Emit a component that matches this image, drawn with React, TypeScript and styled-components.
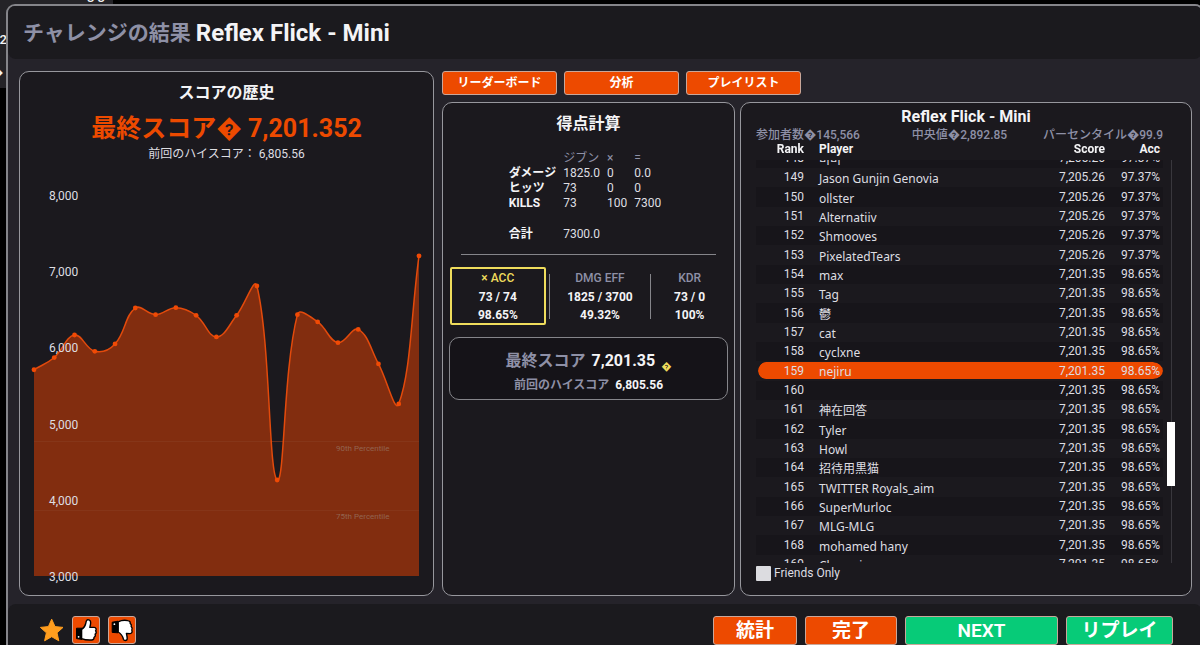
import React, { useLayoutEffect, useRef } from "react";
import styled, { createGlobalStyle, css } from "styled-components";

const color = {
  ink: "#f4f4f6",
  soft: "#dedee2",
  muted: "#8e90a6",
  orange: "#ed4a00",
  green: "#07cb78",
  yellow: "#efdc5c",
  panel: "#1b191e",
  shell: "#25232a",
  bar: "#1b1a1e",
  line: "#85858a",
};

const GlobalStyle = createGlobalStyle`
  *, *::before, *::after { box-sizing: border-box; }
  body {
    margin: 0;
    background: #000;
    color: ${color.ink};
    font: 12px/15px Roboto, "Noto Sans CJK JP", sans-serif;
  }
  h1, h2, p, dl, dd { margin: 0; }
  button { font-family: inherit; }
`;

/* ---------- shell ---------- */

const Stage = styled.div`
  position: relative;
  min-height: 100vh;
  padding: 4px 0 0 6px;
  overflow: hidden;
  display: flex;
`;

const Behind = styled.div`
  position: absolute;
  top: 0;
  left: 0;
  width: 113px;
  height: 88px;
  background: #242327;
  overflow: hidden;
  font-size: 13px;
`;

const BehindText = styled.span<{ $x: number; $y: number }>`
  position: absolute;
  left: ${(p) => p.$x}px;
  top: ${(p) => p.$y}px;
  font-weight: 500;
  white-space: pre;
`;

const Dialog = styled.main`
  position: relative;
  flex: 1;
  min-width: 0;
  margin-right: -4px;
  display: flex;
  flex-direction: column;
  border: 2px solid ${color.line};
  border-bottom: 0;
  border-radius: 9px 9px 0 0;
  background: ${color.shell};
  overflow: hidden;
`;

const Header = styled.header`
  display: flex;
  align-items: center;
  gap: 5px;
  height: 53px;
  padding: 0 15px;
  background: ${color.bar};
  border-radius: 0 0 8px 8px;
`;

const HeaderLabel = styled.span`
  font-size: 21px;
  line-height: 30px;
  font-weight: 600;
  color: ${color.muted};
`;

const Title = styled.h1`
  font-size: 24px;
  line-height: 30px;
  font-weight: 700;
`;

const Body = styled.div`
  flex: 1;
  display: grid;
  grid-template-columns: minmax(0, 415fr) minmax(0, 750fr);
  gap: 8px;
  padding: 12px 10px 8px 11px;
`;

const Panel = styled.section`
  display: flex;
  flex-direction: column;
  min-width: 0;
  border: 1px solid #97979d;
  border-radius: 10px;
  background: ${color.panel};
`;

/* ---------- score history ---------- */

const HistoryPanel = styled(Panel)`
  align-items: center;
  padding: 10px 14px 19px;
`;

const PanelTitle = styled.h2`
  font-size: 16px;
  line-height: 22px;
  font-weight: 700;
  text-align: center;
`;

const FinalScore = styled.p`
  margin-top: 8px;
  font-size: 25px;
  line-height: 34px;
  font-weight: 700;
  color: ${color.orange};
  white-space: nowrap;
`;

const PreviousBest = styled.p`
  line-height: 16px;
  color: ${color.soft};
`;

const Chart = styled.svg`
  display: block;
  width: 100%;
  margin-top: auto;
  overflow: visible;
`;

const AxisText = styled.text`
  font-size: 12px;
  fill: ${color.soft};
`;

const PercentileText = styled.text`
  font-size: 8px;
  fill: #926450;
`;

const scores = [
  5707, 5867, 6163, 5949, 6045, 6517, 6430, 6521, 6421, 6137, 6421, 6806, 4260,
  6430, 6334, 6062, 6236, 5783, 5258, 7201,
];
const percentiles = [
  { label: "90th Percentile", value: 4765 },
  { label: "75th Percentile", value: 3860 },
];

const CHART_W = 385;
const CHART_H = 389;
const yOf = (score: number) => CHART_H - ((score - 3000) / 1000) * 76.2;

type Point = { x: number; y: number };
const points: Point[] = scores.map((s, i) => ({
  x: (i * CHART_W) / (scores.length - 1),
  y: yOf(s),
}));

/* Control points lean towards the neighbours in proportion to segment length. */
function handles(prev: Point, cur: Point, next: Point, tension = 0.4) {
  const before = Math.hypot(cur.x - prev.x, cur.y - prev.y);
  const after = Math.hypot(next.x - cur.x, next.y - cur.y);
  const sum = before + after || 1;
  const fa = (tension * before) / sum;
  const fb = (tension * after) / sum;
  const dx = next.x - prev.x;
  const dy = next.y - prev.y;
  return {
    inn: { x: cur.x - fa * dx, y: cur.y - fa * dy },
    out: { x: cur.x + fb * dx, y: cur.y + fb * dy },
  };
}

function curvePath(pts: Point[]) {
  const h = pts.map((p, i) => handles(pts[i - 1] ?? p, p, pts[i + 1] ?? p));
  return pts.reduce(
    (d, p, i) =>
      i === 0
        ? `M${p.x} ${p.y}`
        : `${d} C${h[i - 1].out.x} ${h[i - 1].out.y} ${h[i].inn.x} ${h[i].inn.y} ${p.x} ${p.y}`,
    ""
  );
}

function ScoreChart() {
  const line = curvePath(points);
  return (
    <Chart viewBox={`0 0 ${CHART_W} ${CHART_H}`} role="img" aria-label="スコアの歴史">
      <path d={`${line} L${CHART_W} ${CHART_H} L0 ${CHART_H} Z`} fill="#822d0f" />
      {percentiles.map((p) => (
        <g key={p.label}>
          <path d={`M0 ${yOf(p.value)}H${CHART_W}`} stroke="#8a3c20" strokeWidth="1" opacity="0.6" />
          <PercentileText x={302} y={yOf(p.value) + 9}>{p.label}</PercentileText>
        </g>
      ))}
      <path d={line} fill="none" stroke="#e24a0c" strokeWidth="1.5" />
      {points.map((p) => (
        <circle key={p.x} cx={p.x} cy={p.y} r="2.4" fill="#f04a05" />
      ))}
      {[8000, 7000, 6000, 5000, 4000, 3000].map((v) => (
        <AxisText key={v} x={15} y={yOf(v) + 5}>{v.toLocaleString("en-US")}</AxisText>
      ))}
    </Chart>
  );
}

/* ---------- right side ---------- */

const RightSide = styled.div`
  display: flex;
  flex-direction: column;
  gap: 7px;
  min-width: 0;
`;

const Tabs = styled.nav`
  display: flex;
  gap: 7px;
`;

const ActionButton = styled.button<{ $tone?: "green" }>`
  padding: 0;
  border: 1px solid #c9a79a;
  border-radius: 3px;
  background: ${(p) => (p.$tone === "green" ? color.green : color.orange)};
  color: #fff;
  font-weight: 600;
  cursor: pointer;
`;

const TabButton = styled(ActionButton)`
  width: 115px;
  height: 24px;
  font-size: 12px;
  line-height: 22px;
`;

const Columns = styled.div`
  flex: 1;
  display: grid;
  grid-template-columns: minmax(0, 293fr) minmax(0, 452fr);
  gap: 5px;
`;

const CalcPanel = styled(Panel)`
  padding: 10px 6px;
`;

const CalcTable = styled.table`
  align-self: center;
  margin: 15px 0 12px;
  border-collapse: collapse;
  td, th {
    height: 15px;
    padding: 0 7px 0 0;
    line-height: 15px;
    font-weight: 400;
    text-align: left;
    color: ${color.soft};
    white-space: nowrap;
  }
  th[scope="row"] {
    font-weight: 700;
    color: ${color.ink};
  }
  thead th {
    color: ${color.muted};
    height: 16px;
  }
  td[colspan] { height: 16px; }
`;

const Rule = styled.hr`
  width: calc(100% - 24px);
  margin: 0 auto 12px;
  border: 0;
  border-top: 1px solid ${color.line};
`;

const Ratios = styled.div`
  display: grid;
  grid-template-columns: 99fr 102fr 78fr;
  align-items: center;
  padding-left: 1px;
`;

const Ratio = styled.dl<{ $active?: boolean }>`
  text-align: center;
  font-weight: 700;
  line-height: 19px;
  border-left: 1px solid ${color.line};
  height: 45px;
  display: flex;
  flex-direction: column;
  justify-content: center;
  dt { color: ${color.muted}; font-weight: 500; }
  dd { line-height: 18px; }
  ${(p) =>
    p.$active &&
    css`
      height: 58px;
      margin-right: 3px;
      border: 2px solid ${color.yellow};
      border-radius: 2px;
      dt { color: ${color.yellow}; }
    `}
`;

const Result = styled.div`
  display: flex;
  flex-direction: column;
  align-items: center;
  justify-content: center;
  gap: 3px;
  height: 63px;
  margin-top: 12px;
  padding-top: 5px;
  border: 1px solid ${color.line};
  border-radius: 10px;
  background: #151318;
`;

const ResultLine = styled.p<{ $big?: boolean }>`
  display: flex;
  align-items: baseline;
  gap: 6px;
  font-size: ${(p) => (p.$big ? 16 : 12)}px;
  line-height: ${(p) => (p.$big ? 24 : 18)}px;
  font-weight: 700;
  span { color: ${color.muted}; font-weight: 600; }
  i {
    font-style: normal;
    font-size: 10px;
    line-height: 12px;
    align-self: flex-end;
    color: ${color.yellow};
  }
`;

/* ---------- leaderboard ---------- */

const BoardPanel = styled(Panel)`
  padding: 3px 15px 14px;
`;

const BoardStats = styled.div`
  display: grid;
  grid-template-columns: 1fr auto 1fr;
  margin-right: 13px;
  line-height: 14px;
  font-weight: 500;
  color: ${color.muted};
  white-space: nowrap;
  span:last-child { text-align: right; }
`;

const BoardBody = styled.div`
  display: flex;
  gap: 4px;
`;

const Viewport = styled.div`
  flex: 1;
  min-width: 0;
  height: 421px;
  overflow: hidden;
`;

const Board = styled.table`
  width: 100%;
  table-layout: fixed;
  border-collapse: separate;
  border-spacing: 0;
  color: ${color.soft};

  th {
    position: sticky;
    top: 0;
    z-index: 1;
    height: 18px;
    padding: 0;
    line-height: 15px;
    vertical-align: top;
    background: ${color.panel};
    color: ${color.ink};
    font-weight: 700;
    text-align: left;
  }
  td {
    height: 19px;
    padding: 0;
    line-height: 19px;
  }
  tr:nth-child(3n) td { height: 20px; }
  th:nth-child(1), td:nth-child(1) { width: 48px; text-align: right; }
  th:nth-child(2), td:nth-child(2) { padding-left: 15px; }
  th:nth-child(3), td:nth-child(3) { width: 100px; text-align: right; }
  th:nth-child(4), td:nth-child(4) { width: 58px; padding-right: 3px; text-align: right; }
`;

const Row = styled.tr<{ $even: boolean; $me: boolean }>`
  td { background: ${(p) => (p.$even ? "#17151a" : "transparent")}; }
  ${(p) =>
    p.$me &&
    css`
      td {
        background: ${color.orange};
        background-clip: padding-box;
        border-top: 1px solid ${color.panel};
        border-bottom: 2px solid ${color.panel};
        line-height: 16px;
      }
      td:first-child {
        border-left: 2px solid ${color.panel};
        border-radius: 10px 0 0 10px;
      }
      td:last-child { border-radius: 0 10px 10px 0; }
    `}
`;

const PlayerName = styled.span`
  display: block;
  height: 17px;
  padding-top: 1px;
  font-family: "Noto Sans", "Noto Sans CJK JP", "Noto Sans CJK KR", sans-serif;
  line-height: 17px;
  white-space: nowrap;
`;

const Track = styled.div`
  position: relative;
  width: 9px;
  margin-top: 18px;
  background: linear-gradient(#39373d, #39373d) 4px 0 / 1px 100% no-repeat;
`;

const Thumb = styled.div`
  position: absolute;
  left: 0;
  top: 65%;
  width: 8px;
  height: 16%;
  background: #fff;
`;

const FriendsOnly = styled.label`
  display: flex;
  align-items: center;
  gap: 3px;
  margin-top: 3px;
  line-height: 15px;
  color: ${color.soft};
  input {
    appearance: none;
    width: 15px;
    height: 15px;
    margin: 0;
    border-radius: 1px;
    background: #dcdce0;
  }
  input:checked { background: ${color.orange}; }
`;

const names = [
  "미미", "Jason Gunjin Genovia", "ollster", "Alternatiiv", "Shmooves",
  "PixelatedTears", "max", "Tag", "鬱", "cat", "cyclxne", "nejiru", "",
  "神在回答", "Tyler", "Howl", "招待用黒猫", "TWITTER Royals_aim",
  "SuperMurloc", "MLG-MLG", "mohamed hany", "Champion",
];
const players = names.map((name, i) => ({
  rank: 148 + i,
  name,
  score: i < 6 ? "7,205.26" : "7,201.35",
  acc: i < 6 ? "97.37%" : "98.65%",
}));

function Leaderboard() {
  const view = useRef<HTMLDivElement>(null);
  useLayoutEffect(() => {
    if (view.current) view.current.scrollTop = 11;
  }, []);
  return (
    <BoardPanel>
      <PanelTitle>Reflex Flick - Mini</PanelTitle>
      <BoardStats>
        <span>参加者数�145,566</span>
        <span>中央値�2,892.85</span>
        <span>パーセンタイル�99.9</span>
      </BoardStats>
      <BoardBody>
        <Viewport ref={view}>
          <Board>
            <thead>
              <tr>
                <th>Rank</th>
                <th>Player</th>
                <th>Score</th>
                <th>Acc</th>
              </tr>
            </thead>
            <tbody>
              {players.map((p) => (
                <Row key={p.rank} $even={p.rank % 2 === 0} $me={p.rank === 159}>
                  <td>{p.rank}</td>
                  <td><PlayerName>{p.name}</PlayerName></td>
                  <td>{p.score}</td>
                  <td>{p.acc}</td>
                </Row>
              ))}
            </tbody>
          </Board>
        </Viewport>
        <Track><Thumb /></Track>
      </BoardBody>
      <FriendsOnly>
        <input type="checkbox" />
        Friends Only
      </FriendsOnly>
    </BoardPanel>
  );
}

/* ---------- footer ---------- */

const Footer = styled.footer`
  display: flex;
  align-items: flex-start;
  justify-content: space-between;
  height: 41px;
  padding: 12px 29px 0 31px;
  background: ${color.bar};
  border-radius: 8px 8px 0 0;
`;

const Group = styled.div`
  display: flex;
  gap: 8px;
`;

const StarButton = styled.button`
  width: 25px;
  height: 28px;
  padding: 0;
  border: 0;
  background: none;
  svg { display: block; }
`;

const VoteButton = styled(ActionButton)`
  width: 28px;
  height: 28px;
  svg { display: block; }
`;

const FooterButton = styled(ActionButton)<{ $width: number }>`
  width: ${(p) => p.$width}px;
  height: 29px;
  font-size: 19px;
  line-height: 27px;
`;

const ThumbUpIcon = () => (
  <svg width="26" height="26" viewBox="0 0 26 26" aria-hidden="true">
    <path d="M3.5 11.2H9V22.4L3.5 21.6Z" fill="#000" stroke="#000" strokeWidth="1" />
    <path
      d="M8.6 12.4C11 11 12.4 8.8 12.8 6.2C13 4.2 13.4 2.7 15 2.6C17.2 2.6 17.9 4.6 17.6 6.6C17.4 8.2 17 9.4 16.8 10.4H21.2C23.2 10.5 23.7 12.6 22.6 13.7C23.6 14.9 23.3 16.4 22.1 17.2C22.7 18.5 22.2 19.8 21 20.3C21.2 22 20.3 23 18.6 23C14.6 23.2 11.4 22.8 8.6 21.6Z"
      fill="#fff"
      stroke="#000"
      strokeWidth="1.4"
      strokeLinejoin="round"
    />
    <circle cx="5.6" cy="19.8" r="0.9" fill="#fff" />
  </svg>
);

const ThumbDownIcon = () => (
  <svg width="26" height="26" viewBox="0 0 26 26" aria-hidden="true">
    <path d="M3.2 5.2L9 4.2V15.8L3.2 15.4Z" fill="#000" stroke="#000" strokeWidth="1" />
    <path
      d="M9.2 4.8C12 3.4 15.4 3 18.8 3.6C20.6 3.8 21.4 5 21.2 6.4C22.4 7.2 22.6 8.4 22.2 9.6C23.2 10.6 23.4 12 22.8 13C23.6 15 22.8 16.6 21 16.6L17.4 16.4C17.8 18.4 18.4 20.2 18.2 22C17.8 23.9 15.2 24 14.4 22.2C13.8 19.6 12.4 16.8 9.2 15Z"
      fill="#fff"
      stroke="#000"
      strokeWidth="1.4"
      strokeLinejoin="round"
    />
    <circle cx="5.4" cy="7.2" r="0.9" fill="#fff" />
  </svg>
);

export default function App() {
  return (
    <Stage>
      <GlobalStyle />
      <Behind aria-hidden="true">
        <BehindText $x={87} $y={-10}>3 3</BehindText>
        <BehindText $x={-8} $y={32}>32</BehindText>
        <BehindText $x={-10} $y={65}>�</BehindText>
      </Behind>
      <Dialog>
        <Header>
          <HeaderLabel>チャレンジの結果</HeaderLabel>
          <Title>Reflex Flick - Mini</Title>
        </Header>
        <Body>
          <HistoryPanel>
            <PanelTitle>スコアの歴史</PanelTitle>
            <FinalScore>最終スコア� 7,201.352</FinalScore>
            <PreviousBest>前回のハイスコア： 6,805.56</PreviousBest>
            <ScoreChart />
          </HistoryPanel>
          <RightSide>
            <Tabs>
              <TabButton>リーダーボード</TabButton>
              <TabButton>分析</TabButton>
              <TabButton>プレイリスト</TabButton>
            </Tabs>
            <Columns>
              <CalcPanel>
                <PanelTitle>得点計算</PanelTitle>
                <CalcTable>
                  <thead>
                    <tr><th /><th>ジブン</th><th>×</th><th>=</th></tr>
                  </thead>
                  <tbody>
                    <tr><th scope="row">ダメージ</th><td>1825.0</td><td>0</td><td>0.0</td></tr>
                    <tr><th scope="row">ヒッツ</th><td>73</td><td>0</td><td>0</td></tr>
                    <tr><th scope="row">KILLS</th><td>73</td><td>100</td><td>7300</td></tr>
                    <tr><td colSpan={4} /></tr>
                    <tr><th scope="row">合計</th><td>7300.0</td><td /><td /></tr>
                  </tbody>
                </CalcTable>
                <Rule />
                <Ratios>
                  <Ratio $active><dt>× ACC</dt><dd>73 / 74</dd><dd>98.65%</dd></Ratio>
                  <Ratio><dt>DMG EFF</dt><dd>1825 / 3700</dd><dd>49.32%</dd></Ratio>
                  <Ratio><dt>KDR</dt><dd>73 / 0</dd><dd>100%</dd></Ratio>
                </Ratios>
                <Result>
                  <ResultLine $big><span>最終スコア</span>7,201.35<i>�</i></ResultLine>
                  <ResultLine><span>前回のハイスコア</span>6,805.56</ResultLine>
                </Result>
              </CalcPanel>
              <Leaderboard />
            </Columns>
          </RightSide>
        </Body>
        <Footer>
          <Group>
            <StarButton aria-label="お気に入り">
              <svg width="25" height="28" viewBox="0 0 25 28">
                <path
                  d="M12.7 3.2L16 10.6L24 11.4L18 16.8L19.8 24.8L12.7 20.7L5.6 24.8L7.4 16.8L1.4 11.4L9.4 10.6Z"
                  fill="#ff9d1e"
                  stroke="#ff9d1e"
                  strokeLinejoin="round"
                />
              </svg>
            </StarButton>
            <VoteButton aria-label="高評価"><ThumbUpIcon /></VoteButton>
            <VoteButton aria-label="低評価"><ThumbDownIcon /></VoteButton>
          </Group>
          <Group>
            <FooterButton $width={84}>統計</FooterButton>
            <FooterButton $width={92}>完了</FooterButton>
            <FooterButton $tone="green" $width={153}>NEXT</FooterButton>
            <FooterButton $tone="green" $width={107}>リプレイ</FooterButton>
          </Group>
        </Footer>
      </Dialog>
    </Stage>
  );
}
